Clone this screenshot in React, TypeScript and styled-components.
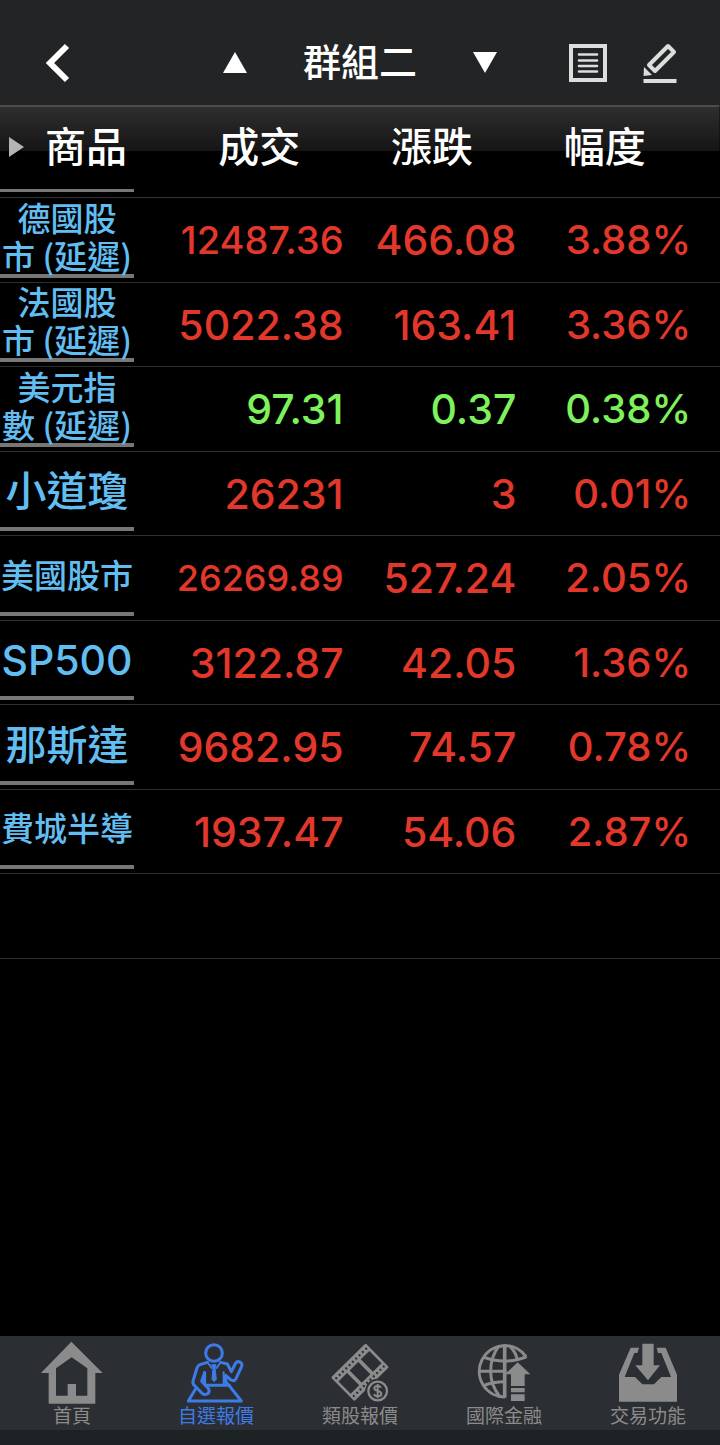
import React from 'react';
import styled, { createGlobalStyle } from 'styled-components';

const GlobalStyle = createGlobalStyle`
  * { box-sizing: border-box; }
  body {
    margin: 0;
    background: #000;
    color: #fff;
    font-family: Inter, "Noto Sans CJK TC", sans-serif;
  }
`;

const Screen = styled.div`
  display: flex;
  flex-direction: column;
  min-height: 100vh;
`;

const TopBar = styled.header`
  display: grid;
  grid-template-columns: 1fr auto 1fr;
  align-items: center;
  padding: 32px 42px 12px;
  background: #222426;
`;

const IconButton = styled.button`
  display: flex;
  padding: 0;
  border: 0;
  background: none;
  color: inherit;
  cursor: pointer;
`;

const GroupSwitch = styled.div`
  display: flex;
  align-items: center;
  gap: 56px;
`;

const Title = styled.h1`
  margin: 0;
  font-size: 38px;
  line-height: 61px;
  font-weight: 500;
`;

const Tools = styled.div`
  display: flex;
  justify-content: flex-end;
  gap: 34px;
  color: #dcdddd;
`;

const Main = styled.main`
  flex: 1;
`;

const Table = styled.table`
  width: 100%;
  table-layout: fixed;
  border-collapse: separate;
  border-spacing: 0;
`;

const Column = styled.col<{ $width: number }>`
  width: ${(p) => p.$width}%;
`;

const HeadRow = styled.tr`
  height: 93px;
  background: linear-gradient(#4c4c4c 2px, #2e2e2e 2px, #151515 46px, #000 46px);
`;

const HeadCell = styled.th`
  padding: 0;
  border-bottom: 1px solid #333;
  font-size: 41px;
  line-height: 60px;
  font-weight: 500;
  text-align: center;
  vertical-align: top;

  &:last-child { padding-right: 4%; }
`;

const HeadLabel = styled.div`
  padding-top: 12px;
`;

const FirstHead = styled.div`
  display: flex;
  align-items: center;
  gap: 21px;
  width: 134px;
  height: 87px;
  padding: 0 0 0 9px;
  border-bottom: 3px solid #777;
`;

const Row = styled.tr`
  height: 84px;

  &:nth-child(odd) { height: 85px; }
`;

const NameCell = styled.th`
  padding: 0 0 4px;
  border-bottom: 1px solid #303030;
  font-weight: 500;
  vertical-align: bottom;
`;

type NameSize = 'large' | 'small' | 'wrapped';

const NameLink = styled.a<{ $size: NameSize }>`
  display: flex;
  align-items: center;
  justify-content: center;
  width: 134px;
  height: 79px;
  padding: ${(p) => (p.$size === 'wrapped' ? '0 0 2px' : '2px 0 0')};
  border-bottom: 4px solid #777;
  color: #62bdf0;
  font-family: ${(p) => (p.$size === 'wrapped' ? '"Noto Sans CJK TC", sans-serif' : 'inherit')};
  font-size: ${(p) => (p.$size === 'large' ? 41 : 33)}px;
  line-height: ${(p) => (p.$size === 'wrapped' ? 38 : 60)}px;
  text-align: center;
  text-decoration: none;
  white-space: pre-line;
`;

const valueSizes = { normal: 41, long: 38, longest: 36, percent: 40 };

const ValueCell = styled.td<{ $up: boolean; $size?: keyof typeof valueSizes }>`
  padding: 0 2px 0 0;
  border-bottom: 1px solid #303030;
  color: ${(p) => (p.$up ? '#e2382b' : '#7df25c')};
  font-size: ${(p) => valueSizes[p.$size ?? 'normal']}px;
  line-height: 48px;
  font-weight: 500;
  text-align: right;
  white-space: nowrap;

  &:last-child { padding-right: 4%; }
`;

const EmptyCell = styled.td`
  border-bottom: 1px solid #303030;
`;

const TabBar = styled.nav`
  display: grid;
  grid-template-columns: repeat(5, 1fr);
  padding: 5px 0 1px;
  background: #2b2e32;
`;

const Tab = styled.a<{ $active?: boolean }>`
  display: flex;
  flex-direction: column;
  align-items: center;
  color: ${(p) => (p.$active ? '#3d7ce8' : '#8b8b8b')};
  font-size: 19px;
  line-height: 24px;
  text-decoration: none;
`;

const SafeArea = styled.div`
  height: 15px;
  background: #1d2225;
`;

const TabSvg = styled.svg`
  width: 64px;
  height: 64px;
`;

const BackIcon = () => (
  <svg width="36" height="40" viewBox="2 0 36 40" fill="none" stroke="currentColor" strokeWidth="6">
    <path d="M27 3 10 20l17 17" strokeLinejoin="miter" />
  </svg>
);

const Triangle = ({ down }: { down?: boolean }) => (
  <svg width="24" height="22" viewBox="0 0 24 22" fill="currentColor">
    <path d={down ? 'M0 0H24L12 21Z' : 'M0 21H24L12 0Z'} />
  </svg>
);

const ListIcon = () => (
  <svg width="40" height="40" viewBox="0 0 40 40" fill="none" stroke="currentColor">
    <path d="M3 3H37V37H3Z" strokeWidth="4" />
    <path d="M11 11.500H29M11 17.500H29M11 23H29M11 28.500H29" strokeWidth="2.600" strokeLinecap="round" />
  </svg>
);

const PencilIcon = () => (
  <svg width="36" height="40" viewBox="0 0 36 40" fill="none" stroke="currentColor">
    <path d="M7 22 26 3 32 9 13 28Z" strokeWidth="4" strokeLinejoin="round" />
    <path d="M2 24 10 32 1.500 33Z" fill="currentColor" stroke="none" />
    <path d="M1.500 38H34.500" strokeWidth="4" />
  </svg>
);

const HomeIcon = () => (
  <TabSvg viewBox="120 48 192 192" fill="currentColor">
    <path fillRule="evenodd" d="M214 50 308 144H286V236H146V144H123ZM215 97 168 130V212H203V177H228V212H262V130Z" />
  </TabSvg>
);

const TraderIcon = () => (
  <TabSvg viewBox="552 48 192 192" fill="none" stroke="currentColor" strokeWidth="9" strokeLinejoin="round" strokeLinecap="round">
    <circle cx="642" cy="84" r="25" />
    <path d="M622 112 600 119Q594 121 591 129L579 168Q577 176 583 181L606 205Q615 212 625 205Q630 197 624 189L605 169 614 143" />
    <path d="M614 143V178M662 112 682 117 694 140 707 114Q712 107 721 112Q728 117 725 124L708 161Q703 170 693 165L677 151V172L688 181" />
    <path d="M616 181H687L724 228H565L588 190" />
    <path d="M624 114 635 129M660 114 650 129" strokeWidth="6" />
    <path d="M636 119H648L645 129 649 163 642 170 636 163 639 129Z" fill="currentColor" strokeWidth="3" />
    <path d="M671 142V179M671 155 684 178" strokeWidth="6" />
  </TabSvg>
);

const holes = [-63, -49, -35, -21, -7, 7, 21, 35, 49, 63];

const FilmIcon = () => (
  <TabSvg viewBox="114 48 192 192">
    <g transform="translate(210 142) rotate(-44.600)">
      <rect x="-73" y="-50" width="146" height="100" rx="4" fill="currentColor" />
      <g fill="#2b2e32">
        {[-65, -18, 29].map((x) => (
          <rect key={x} x={x} y="-26" width="36" height="52" />
        ))}
        {holes.map((x) => (
          <React.Fragment key={x}>
            <rect x={x - 3} y="-41" width="6" height="7" rx="2" />
            <rect x={x - 3} y="34" width="6" height="7" rx="2" />
          </React.Fragment>
        ))}
      </g>
    </g>
    <circle cx="263" cy="198" r="37" fill="#2b2e32" />
    <circle cx="263" cy="198" r="28" fill="none" stroke="currentColor" strokeWidth="7" />
    <path d="M273 188Q271 183 263 183Q253 183 253 190Q253 196 263 198Q274 200 274 207Q274 214 263 214Q254 214 252 207M263 177V220" fill="none" stroke="currentColor" strokeWidth="6" />
  </TabSvg>
);

const GlobeIcon = () => (
  <TabSvg viewBox="546 48 192 192" fill="none" stroke="currentColor" strokeWidth="9">
    <path d="M708 95A77 77 0 1 0 645 216" />
    <path d="M644 58V218" strokeWidth="11" />
    <path d="M626 64Q602 95 602 139T630 215M660 64Q677 81 682 103" />
    <path d="M580 96Q610 108 644 108Q681 108 710 95M566 139H650M580 182Q608 170 644 170" />
    <g fill="currentColor" stroke="none">
      <path d="M683 112 721 148H704V183H663V148H645Z" />
      <path d="M663 189H704V202H663ZM663 208H704V228H663Z" />
    </g>
  </TabSvg>
);

const InboxIcon = () => (
  <TabSvg viewBox="288 48 192 192" fill="currentColor">
    <path d="M332 68H357L352 84H343L314 156H345L367 178H402L424 156H453L424 84H414L410 68H437L471 149V230H297V149Z" />
    <path d="M367 56H401V121H420L384 166 346 121H367Z" />
  </TabSvg>
);

interface Quote {
  name: string;
  size: NameSize;
  price: string;
  priceSize?: 'long' | 'longest';
  change: string;
  percent: string;
  up: boolean;
}

const quotes: Quote[] = [
  { name: '德國股\n市 (延遲)', size: 'wrapped', price: '12487.36', priceSize: 'long', change: '466.08', percent: '3.88%', up: true },
  { name: '法國股\n市 (延遲)', size: 'wrapped', price: '5022.38', change: '163.41', percent: '3.36%', up: true },
  { name: '美元指\n數 (延遲)', size: 'wrapped', price: '97.31', change: '0.37', percent: '0.38%', up: false },
  { name: '小道瓊', size: 'large', price: '26231', change: '3', percent: '0.01%', up: true },
  { name: '美國股市', size: 'small', price: '26269.89', priceSize: 'longest', change: '527.24', percent: '2.05%', up: true },
  { name: 'SP500', size: 'large', price: '3122.87', change: '42.05', percent: '1.36%', up: true },
  { name: '那斯達', size: 'large', price: '9682.95', change: '74.57', percent: '0.78%', up: true },
  { name: '費城半導', size: 'small', price: '1937.47', change: '54.06', percent: '2.87%', up: true },
];

const tabs = [
  { label: '首頁', Icon: HomeIcon },
  { label: '自選報價', Icon: TraderIcon, active: true },
  { label: '類股報價', Icon: FilmIcon },
  { label: '國際金融', Icon: GlobeIcon },
  { label: '交易功能', Icon: InboxIcon },
];

export default function App() {
  return (
    <Screen>
      <GlobalStyle />
      <TopBar>
        <IconButton aria-label="返回"><BackIcon /></IconButton>
        <GroupSwitch>
          <IconButton aria-label="上一組"><Triangle /></IconButton>
          <Title>群組二</Title>
          <IconButton aria-label="下一組"><Triangle down /></IconButton>
        </GroupSwitch>
        <Tools>
          <IconButton aria-label="清單"><ListIcon /></IconButton>
          <IconButton aria-label="編輯"><PencilIcon /></IconButton>
        </Tools>
      </TopBar>
      <Main>
        <Table>
          <colgroup>
            <Column $width={24} />
            <Column $width={24} />
            <Column $width={24} />
            <Column $width={28} />
          </colgroup>
          <thead>
            <HeadRow>
              <HeadCell scope="col">
                <FirstHead>
                  <svg width="15" height="20" viewBox="0 0 15 20" fill="#b4b4b4"><path d="M0 0 15 10 0 20Z" /></svg>
                  商品
                </FirstHead>
              </HeadCell>
              <HeadCell scope="col"><HeadLabel>成交</HeadLabel></HeadCell>
              <HeadCell scope="col"><HeadLabel>漲跌</HeadLabel></HeadCell>
              <HeadCell scope="col"><HeadLabel>幅度</HeadLabel></HeadCell>
            </HeadRow>
          </thead>
          <tbody>
            {quotes.map((q) => (
              <Row key={q.name}>
                <NameCell scope="row">
                  <NameLink href="#" $size={q.size}>{q.name}</NameLink>
                </NameCell>
                <ValueCell $up={q.up} $size={q.priceSize}>{q.price}</ValueCell>
                <ValueCell $up={q.up}>{q.change}</ValueCell>
                <ValueCell $up={q.up} $size="percent">{q.percent}</ValueCell>
              </Row>
            ))}
            <Row><EmptyCell colSpan={4} /></Row>
          </tbody>
        </Table>
      </Main>
      <TabBar>
        {tabs.map(({ label, Icon, active }) => (
          <Tab key={label} href="#" $active={active}>
            <Icon />
            {label}
          </Tab>
        ))}
      </TabBar>
      <SafeArea />
    </Screen>
  );
}
